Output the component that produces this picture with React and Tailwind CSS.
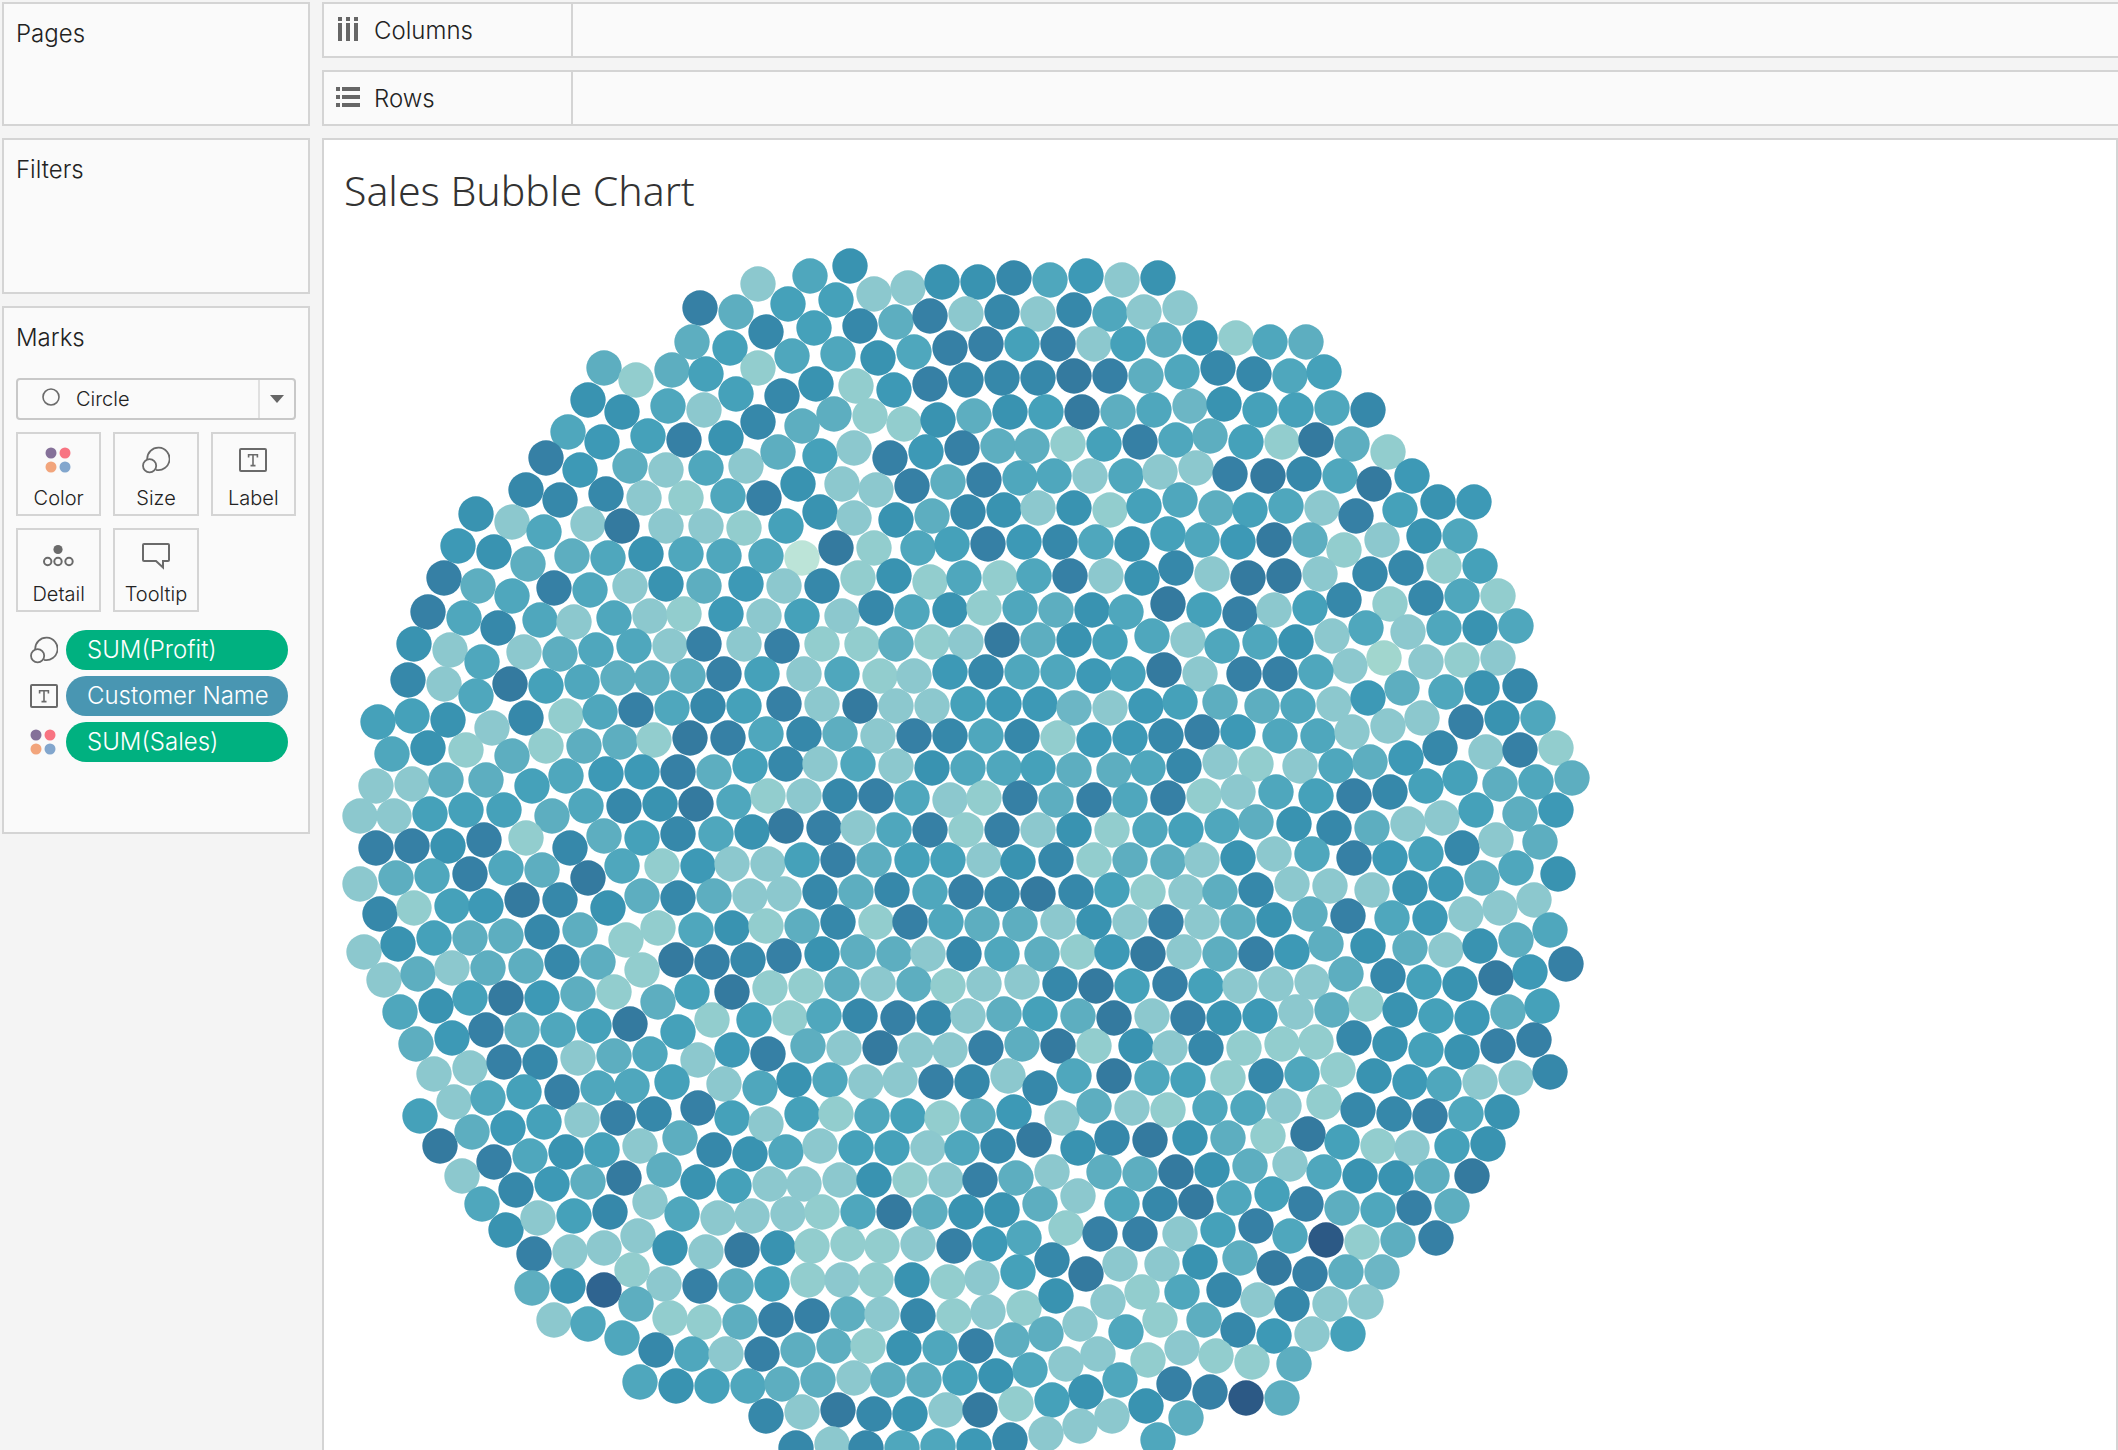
import React from "react";

const COLORS = {
  a: "#bce4d8",
  b: "#a1d6ce",
  c: "#92cdce",
  d: "#8cc8ce",
  e: "#6cb6c5",
  f: "#5daec0",
  g: "#4fa7bd",
  h: "#45a1ba",
  i: "#3d99b6",
  j: "#3993b1",
  k: "#3688aa",
  l: "#3680a5",
  m: "#347a9f",
  n: "#2f6490",
  o: "#2c5985",
};

// Bubble centres, grouped in blocks. Each entry is x,y plus a colour key.
const BLOCKS = [
  {
    x: 0,
    y: 0,
    marks: `1254,132d 1080,204l 1188,216f 1056,306f 1170,324h 1254,384c
792,384f 888,420c 996,390f 1098,402h 744,480j 846,516j 984,498g 1092,510d 1188,462h 1254,546k
684,576g 786,606i 924,588h 1032,600l 1158,594j 618,654l 720,690i 870,678f 978,690d 1098,684g 1218,678d
558,750k 660,780k 798,762k 912,774d 1038,774c 1164,768g
408,822j 516,846d 612,876g 744,852d 846,858m 978,858d 1098,858d 1212,864c
354,918i 462,936j 564,972f 696,948f 804,954g 918,942j 1038,942g 1152,948g
312,1014l 414,1038f 516,1068g 642,1044l 750,1050g 870,1038d 978,1032j 1092,1038f 1218,1032i
264,1116l 372,1134g 474,1164k 600,1140g 702,1146d 822,1134g 930,1128d 1032,1122c 1158,1122i
222,1212j 330,1230d 768,1230g 882,1218g 990,1218d 1092,1212l 1212,1212d`,
  },
  {
    x: 1260,
    y: 0,
    marks: `150,108g 270,78j 84,192h 228,180h 342,162d 444,144d 546,126j 654,126j 762,114k 870,120g 978,108i 1086,120d 1194,114j
18,276k 162,264h 300,258k 408,246f 510,228l 618,222d 726,216k 834,222d 942,210k 1050,222g 1152,216d
96,348g 234,342g 354,354j 462,336g 570,324l 678,312l 786,312h 894,312l 1002,312d 1104,312h 1212,300f
66,468k 168,432j 288,438c 402,450i 510,432l 618,420k 726,414k 834,414k 942,408m 1050,408l 1158,408f
126,558f 222,522f 330,528c 432,552c 534,540j 642,528f 750,516j 858,516h 966,516m 1074,516f 1182,510g
54,636f 180,648h 282,624d 390,654l 498,636i 606,624l 714,618f 816,618f 924,612c 1032,612h 1140,606l 1248,600g
12,774l 114,732j 246,732d 348,750d 456,738l 564,726f 672,720l 780,714g 882,708g 990,708d 1098,708g 1200,696d
78,858h 180,816j 282,834d 408,840j 516,828f 624,816k 732,810j 834,804d 942,804j 1050,810c 1152,798h
18,948g 126,954a 228,924m 342,924c 474,924g 576,912h 684,912l 792,906i 900,906k 1008,906g 1116,912j 1224,882h
72,1038d 186,1038k 294,1014c 402,1008j 510,1026c 612,1014g 720,1014c 822,1008g 930,1008l 1038,1008d 1146,1014j 1248,984k
12,1128d 126,1128h 246,1128d 348,1104k 456,1116g 570,1110j 672,1104c 780,1104g 888,1110f 996,1110j 1098,1116g 1224,1092m
66,1218l 186,1212c 306,1212c 408,1212f 516,1206c 618,1206d 726,1200m 834,1200f 942,1200j 1050,1206h 1176,1188g`,
  },
  {
    x: 2520,
    y: 0,
    marks: `0,204d 60,294j 168,294c 270,306g 378,306f 6,396g 114,384k 222,402k 330,408g 432,396h
30,498e 132,492j 240,510h 348,510h 456,504g 564,510k 90,588f 198,606h 306,606c 408,600m 516,612f 624,636c
48,684d 150,702l 264,708m 372,702k 480,708g 582,732m 696,708i
0,780g 108,804f 210,810h 318,798g 426,804d 528,828l 660,810h 774,786j 882,786i
66,900g 174,906i 282,900m 390,900f 492,930c 606,900d 732,888j 840,888g
96,1002d 204,1014m 312,1008m 420,1002d 570,1002k 678,984k 792,978c 900,978h
72,1110h 180,1122l 282,1110d 390,1104h 492,1080k 630,1092c 738,1074k 846,1068g 954,1068c
24,1200d 126,1218g 240,1206g 348,1206j 456,1188d 558,1164g 684,1176d 792,1164g 900,1164j 1008,1158g`,
  },
  {
    x: 0,
    y: 1230,
    marks: `426,36g 552,6d 660,12f
204,90k 312,102d 408,138g 510,102m 618,108h 726,96g 834,84f 936,84f 1044,78f 1152,72l
114,216h 216,198h 324,210j 456,234d 558,204k 678,198c 780,186g 888,180l 996,174g 1104,168k 1212,168h
156,312g 264,294j 378,300c 516,318f 618,288c 732,288f 840,276f 942,270c 1050,264m 1164,264l
108,408d 216,402d 318,390f 438,390f 576,408h 678,378g 798,372i 906,366i 1014,366l 1122,366f 1230,348h
60,498d 162,498d 270,492h 378,480h 492,480h 636,498f 738,468g 852,468k 960,462j 1068,462m 1182,456g
108,594l 216,588l 324,588j 432,570l 558,564c 690,594k 792,558f 906,564h 1014,552k 1128,552g 1236,546j
60,702d 168,684f 276,678g 390,672l 498,654g 606,660f 744,684m 846,648g 966,648c 1074,648i 1176,642d
120,792k 222,774c 336,768h 438,768i 546,750m 660,750k 804,774j 906,738f 1014,744k 1122,738f 1230,738d
72,906d 174,882j 282,864h 390,864f 498,858f 606,846k 720,840f 858,870c 954,834c 1068,840g 1176,834j
132,990d 234,972f 336,954d 444,954f 558,948f 666,936k 774,936f 906,960c 1008,930m 1116,936l 1224,930k
180,1086g 288,1068j 390,1044h 498,1044m 606,1044i 714,1032f 822,1026c 954,1056f 1056,1026h 1176,1026m
228,1182f 336,1164i 438,1140l 546,1140f 654,1140g 762,1128h 870,1122m 1014,1146h 1116,1110c 1242,1110h`,
  },
  {
    x: 1260,
    y: 1230,
    marks: `6,72h 132,72d 246,72g 360,78c 462,78d 570,66i 678,66k 786,66g 894,66g 1002,78i 1104,72h 1212,60m
72,162l 186,162d 300,168m 408,168d 516,168d 624,162h 732,162i 840,162i 942,174e 1050,174d 1158,168i
18,252g 132,252k 240,252f 354,258d 462,258l 570,258k 678,258g 786,258k 894,264c 1002,270i 1110,264i 1218,258k
78,342k 180,342d 294,342g 408,348d 516,354j 624,354g 732,354g 834,354h 942,360f 1062,360f 1164,354g
24,438c 132,438d 240,438k 348,438l 456,444g 570,450d 672,444c 780,444l 888,450f 1002,450l 1110,450g 1224,444l
78,528m 192,534l 294,534d 402,540g 510,540l 618,540c 726,540l 834,540d 942,540j 1056,540c 1170,540g
24,642d 126,630h 234,630l 342,630f 456,630h 564,630h 672,630d 774,636j 888,630k 1002,630c 1110,630f 1224,636f
72,732d 180,726k 288,726f 396,720k 510,726g 618,726l 726,732k 834,732m 948,726k 1056,720h 1164,726c
18,828c 126,828f 234,816k 348,816c 450,816l 558,816g 666,822f 780,822f 894,816d 1002,816j 1110,816d 1218,816l
72,918l 186,912j 294,906f 402,912f 504,912d 612,912k 726,912g 846,912f 954,906c 1056,906i 1164,912m
30,1014c 138,1008c 246,1002f 354,1002d 462,1002f 564,1008c 672,1002d 786,996d 900,1002k 1008,1008m 1116,1008h 1230,1002l
90,1104c 192,1098g 300,1098k 414,1104l 522,1104k 624,1098d 732,1092f 840,1092h 954,1098f 1062,1104m 1176,1098d
144,1188f 252,1194d 360,1194m 468,1200d 570,1200d 678,1194l 786,1182f 894,1188m 1002,1188c 1128,1188j 1230,1194d`,
  },
  {
    x: 2520,
    y: 1230,
    marks: `510,48d 612,24b 738,36d 846,30c 954,24d 60,72d 192,72l 300,72l 408,66g
0,156h 120,156f 246,168f 354,168g 462,162d 564,144i 666,114f 798,126g 906,114j 1020,108k
66,246l 174,246i 300,258g 414,258g 516,246d 624,228d 726,204d 858,216l 966,204j 1074,204g
12,348k 120,336d 228,342c 360,348d 468,348g 570,336f 678,324i 780,294k 918,306d 1020,300l 1128,294c
72,438c 174,426d 288,426g 408,438h 522,438l 630,426k 738,408h 840,384h 960,402f 1068,396g 1176,384f
18,540h 126,528g 228,516f 342,522j 462,534k 576,534f 684,522d 786,504d 888,480h 1020,492f 1128,480i
66,630d 174,624j 282,612d 396,612g 522,624l 630,624i 738,612h 846,594k 948,570d 1080,576f
18,726d 120,726f 228,720k 336,702d 450,708d 576,720d 690,714j 798,702i 906,684f 1008,654g 1134,672j
66,816d 174,816f 282,810j 390,792f 504,798l 636,804g 750,804i 858,792d 960,774d 1062,750d
12,906d 120,912f 228,912l 336,906i 438,882f 564,888j 690,894f 798,900d 900,888j 1008,870f 1110,840g
78,1008h 180,1008d 288,1002d 396,996d 498,972f 624,978k 732,996h 840,1002j 948,984m 1050,966i 1158,942l
24,1104l 132,1104j 240,1098i 348,1086d 456,1080f 558,1062c 660,1080j 768,1098h 876,1104i 984,1086f 1086,1068h
78,1194k 192,1194c 306,1182c 408,1176c 522,1164k 630,1182j 738,1200h 954,1188l 1062,1170l`,
  },
  {
    x: 0,
    y: 2430,
    marks: `282,72d 390,54d 492,36l 600,36k 714,24d 822,18f 930,12g 1074,30d 1176,0i
240,198h 342,156d 444,144g 552,126h 666,126l 774,114g 876,108g 996,96h 1152,102d
300,288m 396,246f 504,234i 612,216h 726,210d 834,204l 942,192k 1074,174l 1176,204h
366,378d 462,336l 570,318g 678,306j 786,300h 900,288d 1020,264f 1122,300k 1230,312j
426,462g 528,420k 636,402i 744,396f 852,384m 972,360f 1074,396j 1182,408h
498,540j 594,504d 702,498h 810,486k 930,456d 1026,492g 1134,504d 1236,498d
582,612l 690,606d 792,594d 894,558d 990,594j 1098,606d 1206,600m
576,714f 684,708j 792,720n 876,660c 972,702d 1080,708l 1188,708f
642,810d 744,822g 888,762f 990,804c 1092,816c 1200,816f
846,864g 948,900k 1056,912g 1158,912d 900,996g 1008,1008j 1116,1008h 1224,1008g`,
  },
  {
    x: 1260,
    y: 2430,
    marks: `24,12l 0,114g 102,90j 210,90g 318,96d 420,90d 528,96l 636,96k 744,78d 840,114k 942,78g 1062,78m 1176,84g
18,222d 126,192h 228,192c 336,198g 444,198h 546,204c 654,198f 762,186i 906,204d 1002,168f 1116,174d 1224,180c
78,306g 180,288d 288,294h 396,294h 504,294d 606,294g 714,288k 822,270m 954,294j 1056,264k 1170,270m
30,402d 132,402d 240,390d 342,390j 450,390c 558,390d 660,390l 768,384f 876,366d 1032,366f 1140,372f 1248,366m
84,492d 186,486c 294,486g 402,486m 510,486f 618,486j 726,480j 840,462f 954,438d 1086,462g 1200,462k
54,594j 156,588c 264,582c 366,588c 474,582d 582,588l 690,582i 792,564g 918,534c 1020,552l 1140,552l
36,702h 144,690c 246,690d 348,690c 456,690j 564,696c 666,684d 774,666h 876,630k 978,672m 1080,642d 1206,642d
48,810l 156,798l 264,792f 366,792d 474,798k 582,798c 684,786d 792,774c 888,738j 1044,756d 1146,726c
6,912l 114,900f 222,888f 324,888c 432,894j 540,894g 648,888l 756,870f 858,852f 960,822d 1098,846g 1200,810c
66,1002f 174,990f 282,984d 384,990f 492,990f 600,984h 708,978j 810,960g 918,942d 1014,912d 1164,930c
18,1098k 126,1086d 234,1080m 342,1092k 450,1092j 558,1080d 660,1080m 768,1062c 876,1050h 978,1026j 1080,990g 1242,1002l
108,1194k 216,1182d 318,1194k 426,1194g 534,1188g 642,1188i 750,1170k 858,1152d 960,1128d 1056,1098d 1158,1068j 1194,1170g`,
  },
  {
    x: 2520,
    y: 2430,
    marks: `846,6j 24,90h 144,84c 258,78k 366,72g 474,60c 582,78j 690,96i 792,102g 900,96d 1008,84d 1110,66k
90,174g 204,174g 312,168d 432,156c 534,180k 642,192k 750,198l 858,192g 966,186j
30,264j 144,264f 264,258c 384,252m 486,276h 594,288c 696,294d 816,288h 924,282j
96,360j 210,348f 330,342d 432,366g 540,378j 648,384j 756,378f 876,378m
48,456m 162,444g 276,432h 378,462l 486,474f 594,480g 702,474l 816,468f
0,552d 114,540h 228,528l 330,558g 438,570o 546,576c 654,570f 768,564l
60,636j 180,624f 282,654m 390,672l 498,666f 606,666e 6,726g 132,720k 234,750d 336,762k 450,762d 558,756d
72,810f 174,840k 282,858i 396,852d 504,852h 6,894d 108,918c 216,936c 342,942f
90,1026l 198,1044o 306,1044f 18,1104f`,
  },
];

const BUBBLES = BLOCKS.flatMap(({ x, y, marks }) =>
  marks.split(/\s+/).map((mark) => {
    const [, cx, cy, key] = mark.match(/^(-?\d+),(-?\d+)(\w)$/);
    return { cx: x + Number(cx), cy: y + Number(cy), fill: COLORS[key] };
  })
);

function BubbleChart() {
  return (
    <svg
      className="block h-[1210px] w-[1260px] shrink-0"
      viewBox="0 0 3780 3630"
      role="img"
      aria-label="Sales Bubble Chart"
    >
      {BUBBLES.map((b, i) => (
        <circle key={i} cx={b.cx} cy={b.cy} r="53" fill={b.fill} />
      ))}
    </svg>
  );
}

function ColorIcon() {
  return (
    <svg className="h-7 w-7" viewBox="0 0 28 28" aria-hidden="true">
      <circle cx="6" cy="7" r="5.5" fill="#857199" />
      <circle cx="20" cy="7" r="5.5" fill="#f87482" />
      <circle cx="6" cy="21" r="5.5" fill="#f2a57c" />
      <circle cx="20" cy="21" r="5.5" fill="#82a6cd" />
    </svg>
  );
}

function SizeIcon() {
  return (
    <svg className="h-7 w-7" viewBox="0 0 28 28" fill="none" stroke="#6a6a6a" strokeWidth="1.8" aria-hidden="true">
      <path d="M5.2 13.2A11.2 11.2 0 1 1 14 23.8" />
      <circle cx="7.6" cy="19.8" r="6.6" />
    </svg>
  );
}

function LabelIcon() {
  return (
    <svg className="h-7 w-7" viewBox="0 0 28 28" fill="none" stroke="#6a6a6a" strokeWidth="2" aria-hidden="true">
      <rect x="1" y="3" width="26" height="22" rx="1" />
      <path d="M9.6 11.5V8.8h8.8v2.7M14 8.8v11M11.5 19.6h5" strokeWidth="1.6" />
    </svg>
  );
}

function DetailIcon() {
  return (
    <svg className="h-7 w-8" viewBox="0 0 32 28" fill="none" stroke="#6a6a6a" strokeWidth="2" aria-hidden="true">
      <circle cx="15" cy="7.5" r="4.6" fill="#6a6a6a" stroke="none" />
      <circle cx="4.7" cy="19.5" r="3.7" />
      <circle cx="15" cy="19.5" r="3.7" />
      <circle cx="26" cy="19.5" r="3.7" />
    </svg>
  );
}

function TooltipIcon() {
  return (
    <svg className="h-7 w-7" viewBox="0 0 28 28" fill="none" stroke="#6a6a6a" strokeWidth="2" aria-hidden="true">
      <path d="M2 2h24a1 1 0 0 1 1 1v15a1 1 0 0 1-1 1h-5v6.5L14 19H2a1 1 0 0 1-1-1V3a1 1 0 0 1 1-1z" />
    </svg>
  );
}

function ColumnsIcon() {
  return (
    <svg className="mb-1 h-6 w-6" viewBox="0 0 24 24" fill="#666" aria-hidden="true">
      <path d="M2 0h4v4H2zM10 0h4v4h-4zM18 0h4v4h-4zM2 6h4v18H2zM10 6h4v18h-4zM18 6h4v18h-4z" />
    </svg>
  );
}

function RowsIcon() {
  return (
    <svg className="mb-1 h-6 w-6" viewBox="0 0 24 24" fill="#666" aria-hidden="true">
      <path d="M0 2h4v4H0zM0 10h4v4H0zM0 18h4v4H0zM6 2h18v4H6zM6 10h18v4H6zM6 18h18v4H6z" />
    </svg>
  );
}

function Card({ title, className, children }) {
  return (
    <section className={`border-2 border-[#d4d4d4] bg-[#fafafa] px-3 ${className}`}>
      <h2 className="mt-4 text-2xl leading-7 font-light">{title}</h2>
      {children}
    </section>
  );
}

function Shelf({ title, icon }) {
  return (
    <section className="flex h-14 border-y-2 border-l-2 border-[#d4d4d4] bg-[#fafafa]">
      <h2 className="flex w-[249px] shrink-0 items-center gap-3.5 border-r-2 border-[#d4d4d4] pt-0.5 pl-3 text-2xl leading-7 font-light">
        {icon}
        {title}
      </h2>
    </section>
  );
}

function MarkButton({ icon, label }) {
  return (
    <button
      type="button"
      className="flex h-[84px] flex-col items-center border-2 border-[#d4d4d4] bg-[#fafafa] pt-3 text-xl leading-6 font-light"
    >
      <span className="mb-3 h-7">{icon}</span>
      {label}
    </button>
  );
}

function Pill({ icon, label, className }) {
  return (
    <li className="flex items-center gap-2 pr-2 pl-3.5">
      {icon}
      <button
        type="button"
        className={`h-10 flex-1 rounded-full pl-[21px] text-left text-2xl leading-10 font-light whitespace-nowrap text-white ${className}`}
      >
        {label}
      </button>
    </li>
  );
}

export default function App() {
  return (
    <div className="flex h-screen gap-3 overflow-hidden bg-[#f4f4f4] pt-0.5 pl-0.5 font-['Inter',sans-serif] text-[#222]">
      <aside className="flex w-[308px] shrink-0 flex-col gap-3">
        <Card title="Pages" className="h-[124px]" />
        <Card title="Filters" className="h-[156px]" />
        <Card title="Marks" className="h-[528px]">
          <div className="relative mt-[26px]">
            <select
              aria-label="Mark type"
              defaultValue="Circle"
              className="block h-[42px] w-full appearance-none rounded-sm border-2 border-[#c8c8c8] bg-[#fafafa] pl-[58px] text-xl font-light"
            >
              <option>Circle</option>
              <option>Square</option>
              <option>Bar</option>
            </select>
            <svg className="pointer-events-none absolute top-2.5 left-6 h-5 w-5" viewBox="0 0 20 20" fill="none" stroke="#6a6a6a" strokeWidth="1.6" aria-hidden="true">
              <circle cx="11" cy="9" r="8" />
            </svg>
            <span className="pointer-events-none absolute inset-y-0.5 right-0.5 flex w-9 items-center justify-center border-l-2 border-[#e0e0e0]">
              <svg className="h-2 w-3.5" viewBox="0 0 14 8" fill="#666" aria-hidden="true">
                <path d="M0 0h14L7 8z" />
              </svg>
            </span>
          </div>
          <div className="mt-3 grid grid-cols-3 gap-3">
            <MarkButton icon={<ColorIcon />} label="Color" />
            <MarkButton icon={<SizeIcon />} label="Size" />
            <MarkButton icon={<LabelIcon />} label="Label" />
            <MarkButton icon={<DetailIcon />} label="Detail" />
            <MarkButton icon={<TooltipIcon />} label="Tooltip" />
          </div>
          <ul className="mt-[18px] flex flex-col gap-1.5">
            <Pill icon={<SizeIcon />} label="SUM(Profit)" className="bg-[#00b180]" />
            <Pill icon={<LabelIcon />} label="Customer Name" className="bg-[#4996b2]" />
            <Pill icon={<ColorIcon />} label="SUM(Sales)" className="bg-[#00b180]" />
          </ul>
        </Card>
      </aside>
      <main className="flex min-w-0 flex-1 flex-col gap-3">
        <Shelf title="Columns" icon={<ColumnsIcon />} />
        <Shelf title="Rows" icon={<RowsIcon />} />
        <section className="flex min-h-0 flex-1 flex-col overflow-hidden border-x-2 border-t-2 border-[#d4d4d4] bg-white pl-4">
          <h1 className="flex h-[100px] shrink-0 items-center pl-1 font-['Noto_Sans',sans-serif] text-[41px] leading-[48px] font-light text-[#333]">
            Sales Bubble Chart
          </h1>
          <BubbleChart />
        </section>
      </main>
    </div>
  );
}
